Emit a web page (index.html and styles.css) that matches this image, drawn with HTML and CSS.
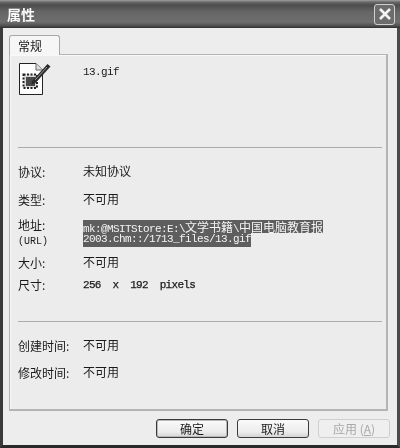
FILE: index.html
```html
<!DOCTYPE html>
<html lang="zh">
<head>
  <meta charset="UTF-8">
  <title>属性</title>
  <link rel="stylesheet" href="styles.css">
</head>
<body>
  <div class="window">
    <div class="titlebar">
      <span class="title">属性</span>
      <button class="close-btn">
        <svg width="14" height="14" viewBox="0 0 14 14"><path d="M2 2 L12 12 M12 2 L2 12" stroke="#f4f4f4" stroke-width="2.6" fill="none"/></svg>
      </button>
    </div>

    <div class="client">
      <div class="tabs"><div class="tab">常规</div></div>

      <div class="panel">
        <div class="file-head">
          <svg class="file-icon" width="34" height="34" viewBox="0 0 34 34">
            <path d="M1.500 1.500 H18 L24.500 8 V32.500 H1.500 Z" fill="#fdfdfd" stroke="#222" stroke-width="1"/>
            <path d="M18 1.500 V8 H24.500" fill="#ddd" stroke="#666" stroke-width="1"/>
            <rect x="5.500" y="12.500" width="13.500" height="13.500" fill="#d8d8d8" stroke="#222" stroke-width="2" stroke-dasharray="2 1.500"/>
            <rect x="8" y="15" width="9" height="9" fill="#484848"/>
            <path d="M14 19 L29.500 2 L32.500 4.500 L17 21.500 L13.500 22.500 Z" fill="#2c2c2c"/>
            <path d="M17 18 L29 5" stroke="#999" stroke-width="1"/>
          </svg>
          <span class="mono file-name">13.gif</span>
        </div>

        <div class="sep"></div>

        <div class="row row-protocol"><span class="label">协议:</span><span class="value">未知协议</span></div>
        <div class="row row-type"><span class="label">类型:</span><span class="value">不可用</span></div>
        <div class="row row-address">
          <div class="label">地址:<br><span class="url-label">(URL)</span></div>
          <div class="address">
            <div class="sel mono">mk:@MSITStore:E:\<span class="cjk">文学书籍</span>\<span class="cjk">中国电脑教育报</span></div>
            <div class="sel mono">2003.chm::/1713_files/13.gif</div>
          </div>
        </div>
        <div class="row row-size"><span class="label">大小:</span><span class="value">不可用</span></div>
        <div class="row row-dim"><span class="label">尺寸:</span><span class="mono dims">256&nbsp;&nbsp;x&nbsp;&nbsp;192&nbsp;&nbsp;pixels</span></div>

        <div class="sep sep-bottom"></div>

        <div class="row row-created"><span class="label">创建时间:</span><span class="value">不可用</span></div>
        <div class="row row-changed"><span class="label">修改时间:</span><span class="value">不可用</span></div>
      </div>

      <div class="buttons">
        <button class="btn btn-ok">确定</button>
        <button class="btn">取消</button>
        <button class="btn btn-off">应用 (<u>A</u>)</button>
      </div>
    </div>
  </div>
</body>
</html>
```

FILE: styles.css
```css
* {
  box-sizing: border-box;
}

html, body {
  margin: 0;
  padding: 0;
  background: #2e2e2e;
}

body {
  width: 400px;
  height: 448px;
  overflow: hidden;
  font-family: "Noto Sans CJK SC", "Liberation Sans", sans-serif;
  font-size: 12px;
  color: #1a1a1a;
}

.window {
  width: 400px;
  height: 448px;
  display: flex;
  flex-direction: column;
  border-left: 3px solid #3a3a3a;
  border-right: 3px solid #4a4a4a;
  border-bottom: 3px solid #2a2a2a;
  filter: blur(0.35px);
}

.titlebar {
  height: 28px;
  margin: 0 -3px;
  padding: 0 5px 0 7px;
  display: flex;
  align-items: center;
  justify-content: space-between;
  background: linear-gradient(#a0a0a0 0, #6a6a6a 2px, #4c4c4c 5px, #666 12px, #6e6e6e 22px, #4e4e4e 26px, #2c2c2c 28px);
}

.title {
  font-size: 14px;
  font-weight: 700;
  color: #fbfbfb;
  line-height: 1;
}

.close-btn {
  width: 21px;
  height: 21px;
  padding: 0;
  display: flex;
  align-items: center;
  justify-content: center;
  background: #6c6c6c;
  border: 1px solid #d0d0d0;
  border-radius: 3px;
}

.client {
  flex: 1;
  display: flex;
  flex-direction: column;
  padding: 7px 6px 0 6px;
  background: #ededed;
}

.tabs {
  display: flex;
  height: 19px;
}

.tab {
  width: 51px;
  height: 20px;
  padding-left: 8px;
  line-height: 19px;
  background: #f6f6f6;
  border: 1px solid #a8a8a8;
  border-bottom: none;
  border-radius: 3px 3px 0 0;
  position: relative;
  z-index: 1;
  font-size: 12px;
}

.panel {
  width: 379px;
  height: 357px;
  padding: 7px 4px 0 8px;
  background: #ececec;
  border: 1px solid #b4b4b4;
  border-right-width: 2px;
  border-bottom-width: 2px;
  box-shadow: inset 1px 1px 0 #f8f8f8;
}

.file-head {
  display: flex;
  align-items: flex-start;
  height: 85px;
}

.file-icon {
  display: block;
  width: 34px;
  height: 34px;
  margin-right: 31px;
}

.file-name {
  margin-top: 4px;
}

.mono {
  font-family: "Liberation Mono", "Noto Sans CJK SC", monospace;
  font-size: 11px;
  letter-spacing: -0.6px;
  line-height: 13px;
}

.cjk {
  font-family: "Noto Sans CJK SC", sans-serif;
  font-size: 12px;
  letter-spacing: 0;
}

.sep {
  height: 1px;
  background: #ababab;
}

.row {
  display: flex;
  align-items: center;
}

.label {
  width: 65px;
  flex: none;
  line-height: 14px;
}

.value {
  line-height: 14px;
  margin-bottom: 3px;
}

.url-label {
  font-family: "Liberation Mono", monospace;
  font-size: 10px;
}

.row-protocol { height: 24px; margin-top: 12px; }
.row-type { height: 24px; margin-top: 4px; }
.row-address { height: 28px; margin-top: 7px; }
.row-size { height: 20px; margin-top: 6px; }
.row-dim { height: 20px; margin-top: 2px; }
.row-created { height: 24px; margin-top: 12px; }
.row-changed { height: 24px; margin-top: 3px; }

.sep-bottom { margin-top: 26px; }

.dims {
  letter-spacing: -0.7px;
  -webkit-text-stroke: 0.25px #1a1a1a;
}

.sel {
  width: fit-content;
  height: 13.5px;
  line-height: 13.5px;
  white-space: nowrap;
  background: #5e5e5e;
  color: #f4f4f4;
}

.buttons {
  display: flex;
  justify-content: flex-end;
  gap: 9px;
  padding: 8px 1px 0 0;
}

.btn {
  width: 72px;
  height: 19px;
  padding: 0;
  font: 12px/1 "Noto Sans CJK SC", sans-serif;
  color: #1a1a1a;
  background: linear-gradient(#fafafa, #ececec 70%, #d4d4d4);
  border: 1px solid #3a3a3a;
  border-radius: 3px;
}

.btn-ok {
  box-shadow: inset 0 0 0 1px #b8b8b8;
}

.btn-off {
  color: #a8a8a8;
  background: #efefef;
  border-color: #cfcfcf;
}
```
